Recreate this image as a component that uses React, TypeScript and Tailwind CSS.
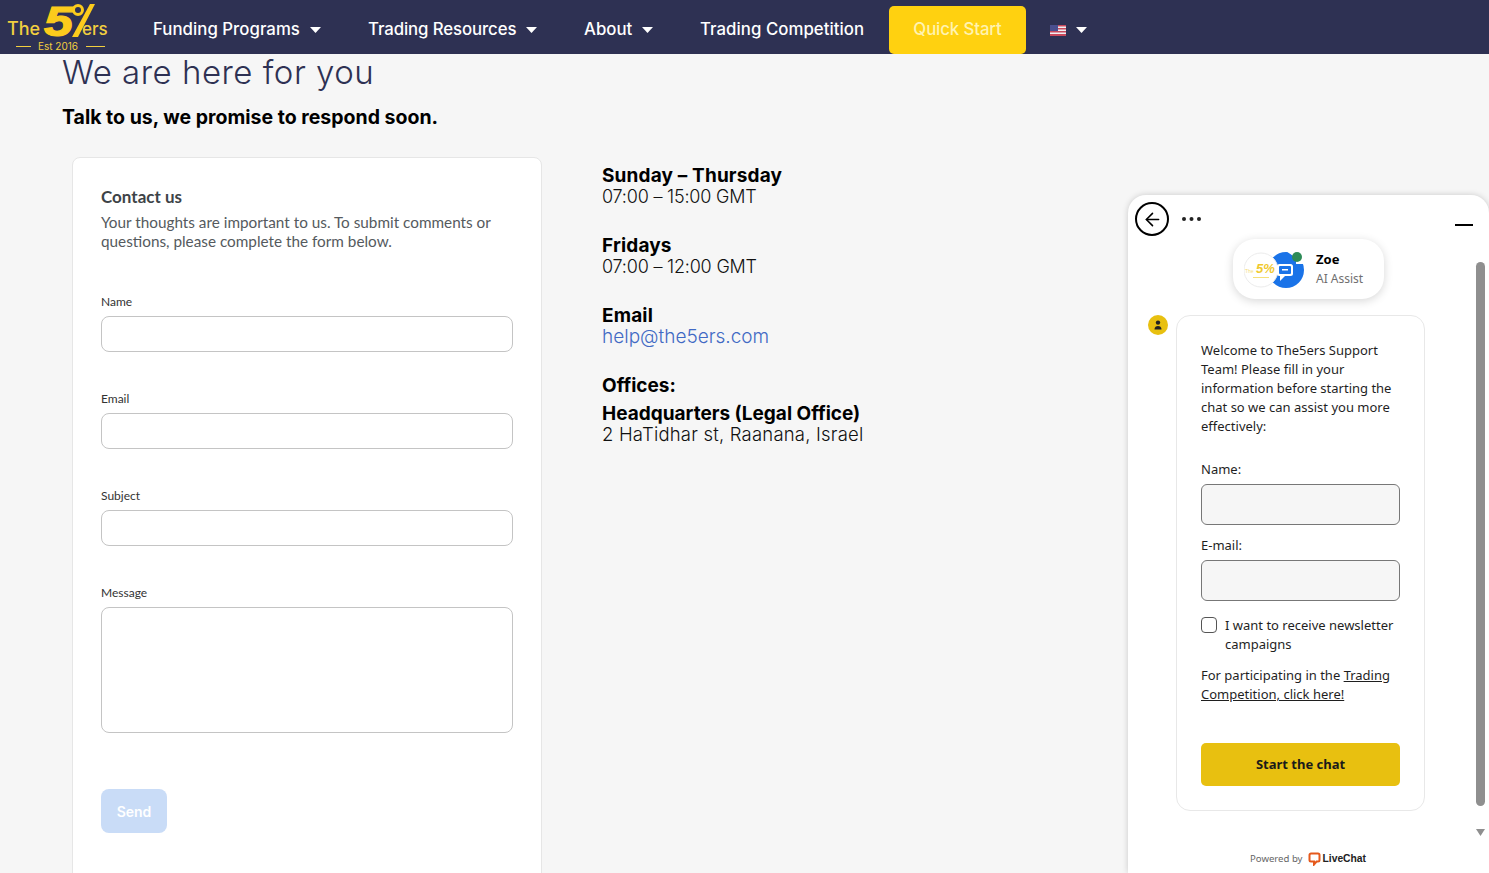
import React from "react";
import { ArrowLeft } from "lucide-react";

const poppins = "font-['Inter','Liberation_Sans',sans-serif]";

function Logo() {
  return (
    <svg width="112" height="54" viewBox="0 0 112 54" className="shrink-0">
      <text x="7" y="35" fontFamily="Inter, sans-serif" fontSize="18" fontWeight="500" fill="#f2cf3f">The</text>
      <text x="44" y="36" textLength="29" lengthAdjust="spacingAndGlyphs" fontFamily="Liberation Sans, sans-serif" fontSize="43" fontWeight="700" fontStyle="italic" fill="#fccb1c" stroke="#fccb1c" strokeWidth="1.2">5</text>
      <circle cx="78" cy="10" r="4.500" fill="none" stroke="#fccb1c" strokeWidth="3" />
      <path d="M90 4 L72 37 L78 37 L95 4 Z" fill="#fccb1c" />
      <text x="82" y="35" fontFamily="Inter, sans-serif" fontSize="17" fontWeight="500" fill="#f2cf3f">ers</text>
      <text x="38" y="50" fontFamily="Inter, sans-serif" fontSize="10" fill="#f2cf3f">Est 2016</text>
      <rect x="16" y="46" width="15" height="1" fill="#f2cf3f" />
      <rect x="86" y="46" width="19" height="1" fill="#f2cf3f" />
    </svg>
  );
}

function Caret() {
  return (
    <svg width="11" height="6" viewBox="0 0 11 6">
      <path d="M0 0h11L5.500 6z" fill="#fff" />
    </svg>
  );
}

function Flag() {
  return (
    <svg width="16" height="11" viewBox="0 0 16 11">
      <rect width="16" height="11" fill="#f1eff2" />
      <rect y="0" width="16" height="1.500" fill="#c9495c" />
      <rect y="3" width="16" height="1.500" fill="#c9495c" />
      <rect y="6" width="16" height="1.500" fill="#c9495c" />
      <rect y="9" width="16" height="2" fill="#c9495c" />
      <rect width="8" height="6" fill="#4a4f8f" />
    </svg>
  );
}

function NavItem({ label, width, spacing }: { label: string; width: string; spacing: string }) {
  return (
    <div className={`flex items-center gap-[10px] ${width}`}>
      <span className={`text-[16.8px] ${spacing} font-medium text-white whitespace-nowrap`}>{label}</span>
      <Caret />
    </div>
  );
}

function Field({ label, wrap }: { label: string; wrap: string }) {
  return (
    <div className={wrap}>
      <div className="text-[12px] leading-[15px] text-[#333] font-['Lato',sans-serif] mb-[7px]">{label}</div>
      <div className="h-[36px] rounded-[8px] border border-[#c4c4c4] bg-white" />
    </div>
  );
}

function InfoBlock({ title, children }: { title: string; children: React.ReactNode }) {
  return (
    <div className="mb-[28px]">
      <div className="text-[19px] leading-[21px] font-bold tracking-[0.15px] text-black">{title}</div>
      {children}
    </div>
  );
}

function ChatWidget() {
  return (
    <div className="absolute right-0 top-[195px] bottom-0 w-[361px] rounded-t-[18px] bg-white shadow-[0_0_6px_rgba(0,0,0,0.18)] font-['Noto_Sans','Open_Sans',sans-serif] flex flex-col">
      <div className="flex items-start h-[44px] pl-[7px] pt-[7px] pr-[16px]">
        <div className="w-[34px] h-[34px] rounded-full border-2 border-black flex items-center justify-center shrink-0">
          <ArrowLeft size={21} strokeWidth={1.8} color="#000" />
        </div>
        <svg width="22" height="6" viewBox="0 0 22 6" className="ml-[12px] mt-[14px]">
          <circle cx="3" cy="3" r="2" fill="#222" />
          <circle cx="10.500" cy="3" r="2" fill="#222" />
          <circle cx="18" cy="3" r="2" fill="#222" />
        </svg>
        <div className="ml-auto mt-[22px] w-[18px] h-[2px] bg-black" />
      </div>

      <div className="flex flex-1 min-h-0">
        <div className="w-[348px] flex flex-col">
          <div className="self-center ml-[13px] h-[60px] w-[151px] rounded-[22px] bg-white shadow-[0_2px_10px_rgba(0,0,0,0.16)] flex items-center pl-[11px]">
            <div className="w-[60px] h-[37px] shrink-0">
              <svg width="60" height="37" viewBox="0 0 60 37">
                <circle cx="42" cy="19" r="18" fill="#1a73e8" />
                <circle cx="17" cy="19" r="17" fill="#fff" stroke="#ececec" />
                <text x="12" y="22" fontFamily="Liberation Sans, sans-serif" fontSize="13" fontWeight="700" fontStyle="italic" fill="#f0c92e">5%</text>
                <text x="1" y="22" fontFamily="Liberation Sans, sans-serif" fontSize="5" fill="#f5e07a">The</text>
                <rect x="9" y="26" width="16" height="1" fill="#f5e07a" />
                <rect x="33" y="13" width="16" height="12" rx="2.500" fill="#fff" />
                <rect x="35" y="15" width="12" height="8" rx="1" fill="#1a73e8" />
                <rect x="38" y="18" width="6" height="1.500" fill="#fff" />
                <path d="M36 25v5l5-5z" fill="#fff" />
                <path d="M42 0h18v13h-8v-6z" fill="#fff" />
                <circle cx="53" cy="6" r="5" fill="#2e8b57" />
              </svg>
            </div>
            <div className="ml-[12px]">
              <div className="text-[13px] leading-[19px] font-bold text-black">Zoe</div>
              <div className="text-[12px] leading-[19px] text-[#6f6f6f]">AI Assist</div>
            </div>
          </div>

          <div className="flex mt-[16px] pl-[20px]">
            <div className="w-[20px] h-[20px] rounded-full bg-[#e8c010] flex items-center justify-center shrink-0">
              <svg width="10" height="10" viewBox="0 0 10 10">
                <circle cx="5" cy="2.600" r="2.200" fill="#222" />
                <path d="M1.500 9.500C1.500 7 3 6 5 6s3.500 1 3.500 3.500z" fill="#222" />
              </svg>
            </div>
            <div className="ml-[8px] w-[249px] h-[496px] rounded-[14px] border border-[#e8e8e8] bg-white px-[24px] pt-[25px] text-[13px] leading-[19px] text-[#1f1f1f]">
              <p>Welcome to The5ers Support Team! Please fill in your information before starting the chat so we can assist you more effectively:</p>
              <div className="mt-[24px]">Name:</div>
              <div className="mt-[5px] h-[41px] rounded-[6px] border border-[#777] bg-[#f6f6f6]" />
              <div className="mt-[11px]">E-mail:</div>
              <div className="mt-[5px] h-[41px] rounded-[6px] border border-[#777] bg-[#f6f6f6]" />
              <div className="mt-[15px] flex items-start">
                <div className="mt-[1px] w-[16px] h-[16px] rounded-[4px] border-[1.5px] border-[#555] shrink-0" />
                <div className="ml-[8px]">I want to receive newsletter campaigns</div>
              </div>
              <p className="mt-[12px]">
                For participating in the <span className="underline">Trading Competition, click here!</span>
              </p>
              <div className="mt-[39px] h-[43px] rounded-[5px] bg-[#e8c010] flex items-center justify-center text-[13px] font-bold text-[#1a1a1a]">
                Start the chat
              </div>
            </div>
          </div>

          <div className="flex items-center justify-center mt-[40px] ml-[12px]">
            <span className="text-[9.6px] text-[#666]">Powered by</span>
            <svg width="13" height="14" viewBox="0 0 13 14" className="ml-[5px]">
              <path d="M3 1.500h7a1.500 1.500 0 0 1 1.500 1.500v5A1.500 1.500 0 0 1 10 9.500H8.500L6 12.500V9.500H3A1.500 1.500 0 0 1 1.500 8V3A1.500 1.500 0 0 1 3 1.500z" fill="none" stroke="#e5591c" strokeWidth="2" />
            </svg>
            <span className="ml-[2px] text-[10.3px] font-bold text-[#222] font-['Liberation_Sans',sans-serif]">LiveChat</span>
          </div>
        </div>

        <div className="w-[13px] flex flex-col items-start pt-[23px] pb-[37px]">
          <div className="w-[9px] flex-1 rounded-full bg-[#8f8f8f]" />
          <svg width="9" height="7" viewBox="0 0 9 7" className="mt-[23px]">
            <path d="M0 0h9L4.500 7z" fill="#8f8f8f" />
          </svg>
        </div>
      </div>
    </div>
  );
}

export default function App() {
  return (
    <div className={`relative h-[873px] overflow-hidden bg-[#f6f6f6] ${poppins}`}>
      <header className="h-[54px] bg-[#2e3153] flex items-start">
        <Logo />
        <nav className="flex items-center h-[48px] mt-[6px] ml-[41px]">
          <NavItem label="Funding Programs" width="w-[215px]" spacing="tracking-[0.03px]" />
          <NavItem label="Trading Resources" width="w-[216px]" spacing="tracking-[-0.1px]" />
          <NavItem label="About" width="w-[116px]" spacing="tracking-normal" />
          <span className="w-[189px] text-[16.8px] tracking-[0.05px] font-medium text-white whitespace-nowrap">Trading Competition</span>
          <div className="w-[137px] h-[48px] rounded-[5px] bg-[#ffd110] flex items-center justify-center text-[16.8px] tracking-[-0.1px] font-medium text-[#fff3b0]">
            Quick Start
          </div>
          <div className="flex items-center gap-[10px] ml-[24px]">
            <Flag />
            <Caret />
          </div>
        </nav>
      </header>

      <main className="pl-[62px]">
        <h1 className="text-[33px] leading-[36px] font-light tracking-[0.5px] text-[#2e3153]">We are here for you</h1>
        <h2 className="mt-[14px] text-[19.5px] leading-[26px] font-bold text-black">Talk to us, we promise to respond soon.</h2>

        <div className="flex mt-[27px]">
          <section className="ml-[10px] w-[470px] h-[760px] shrink-0 rounded-[8px] border border-[#e6e6e6] bg-white px-[28px] pt-[28px]">
            <h3 className="text-[17px] leading-[21px] font-bold text-[#3d4347] font-['Lato',sans-serif]">Contact us</h3>
            <p className="mt-[6px] text-[15.3px] leading-[19px] text-[#555a5e] font-['Lato',sans-serif]">
              Your thoughts are important to us. To submit comments or questions, please complete the form below.
            </p>
            <Field label="Name" wrap="mt-[43px]" />
            <Field label="Email" wrap="mt-[39px]" />
            <Field label="Subject" wrap="mt-[39px]" />
            <div className="mt-[39px]">
              <div className="text-[12px] leading-[15px] text-[#333] font-['Lato',sans-serif] mb-[7px]">Message</div>
              <div className="h-[126px] rounded-[8px] border border-[#c4c4c4] bg-white" />
            </div>
            <div className="mt-[56px] w-[66px] h-[44px] rounded-[8px] bg-[#c9dcf7] flex items-center justify-center text-[14px] font-semibold text-white">
              Send
            </div>
          </section>

          <section className="ml-[60px] pt-[8px]">
            <InfoBlock title="Sunday – Thursday">
              <div className="text-[18px] leading-[21px] font-light tracking-[-0.2px] text-[#111]">07:00 – 15:00 GMT</div>
            </InfoBlock>
            <InfoBlock title="Fridays">
              <div className="text-[18px] leading-[21px] font-light tracking-[-0.2px] text-[#111]">07:00 – 12:00 GMT</div>
            </InfoBlock>
            <InfoBlock title="Email">
              <div className="text-[19px] leading-[21px] font-light text-[#4169c4]">help@the5ers.com</div>
            </InfoBlock>
            <div className="text-[19px] leading-[21px] font-bold text-black">Offices:</div>
            <div className="mt-[7px] text-[19px] leading-[21px] font-bold text-black">Headquarters (Legal Office)</div>
            <div className="text-[18.5px] leading-[21px] font-light tracking-[0.2px] text-[#111]">2 HaTidhar st, Raanana, Israel</div>
          </section>
        </div>
      </main>

      <ChatWidget />
    </div>
  );
}
